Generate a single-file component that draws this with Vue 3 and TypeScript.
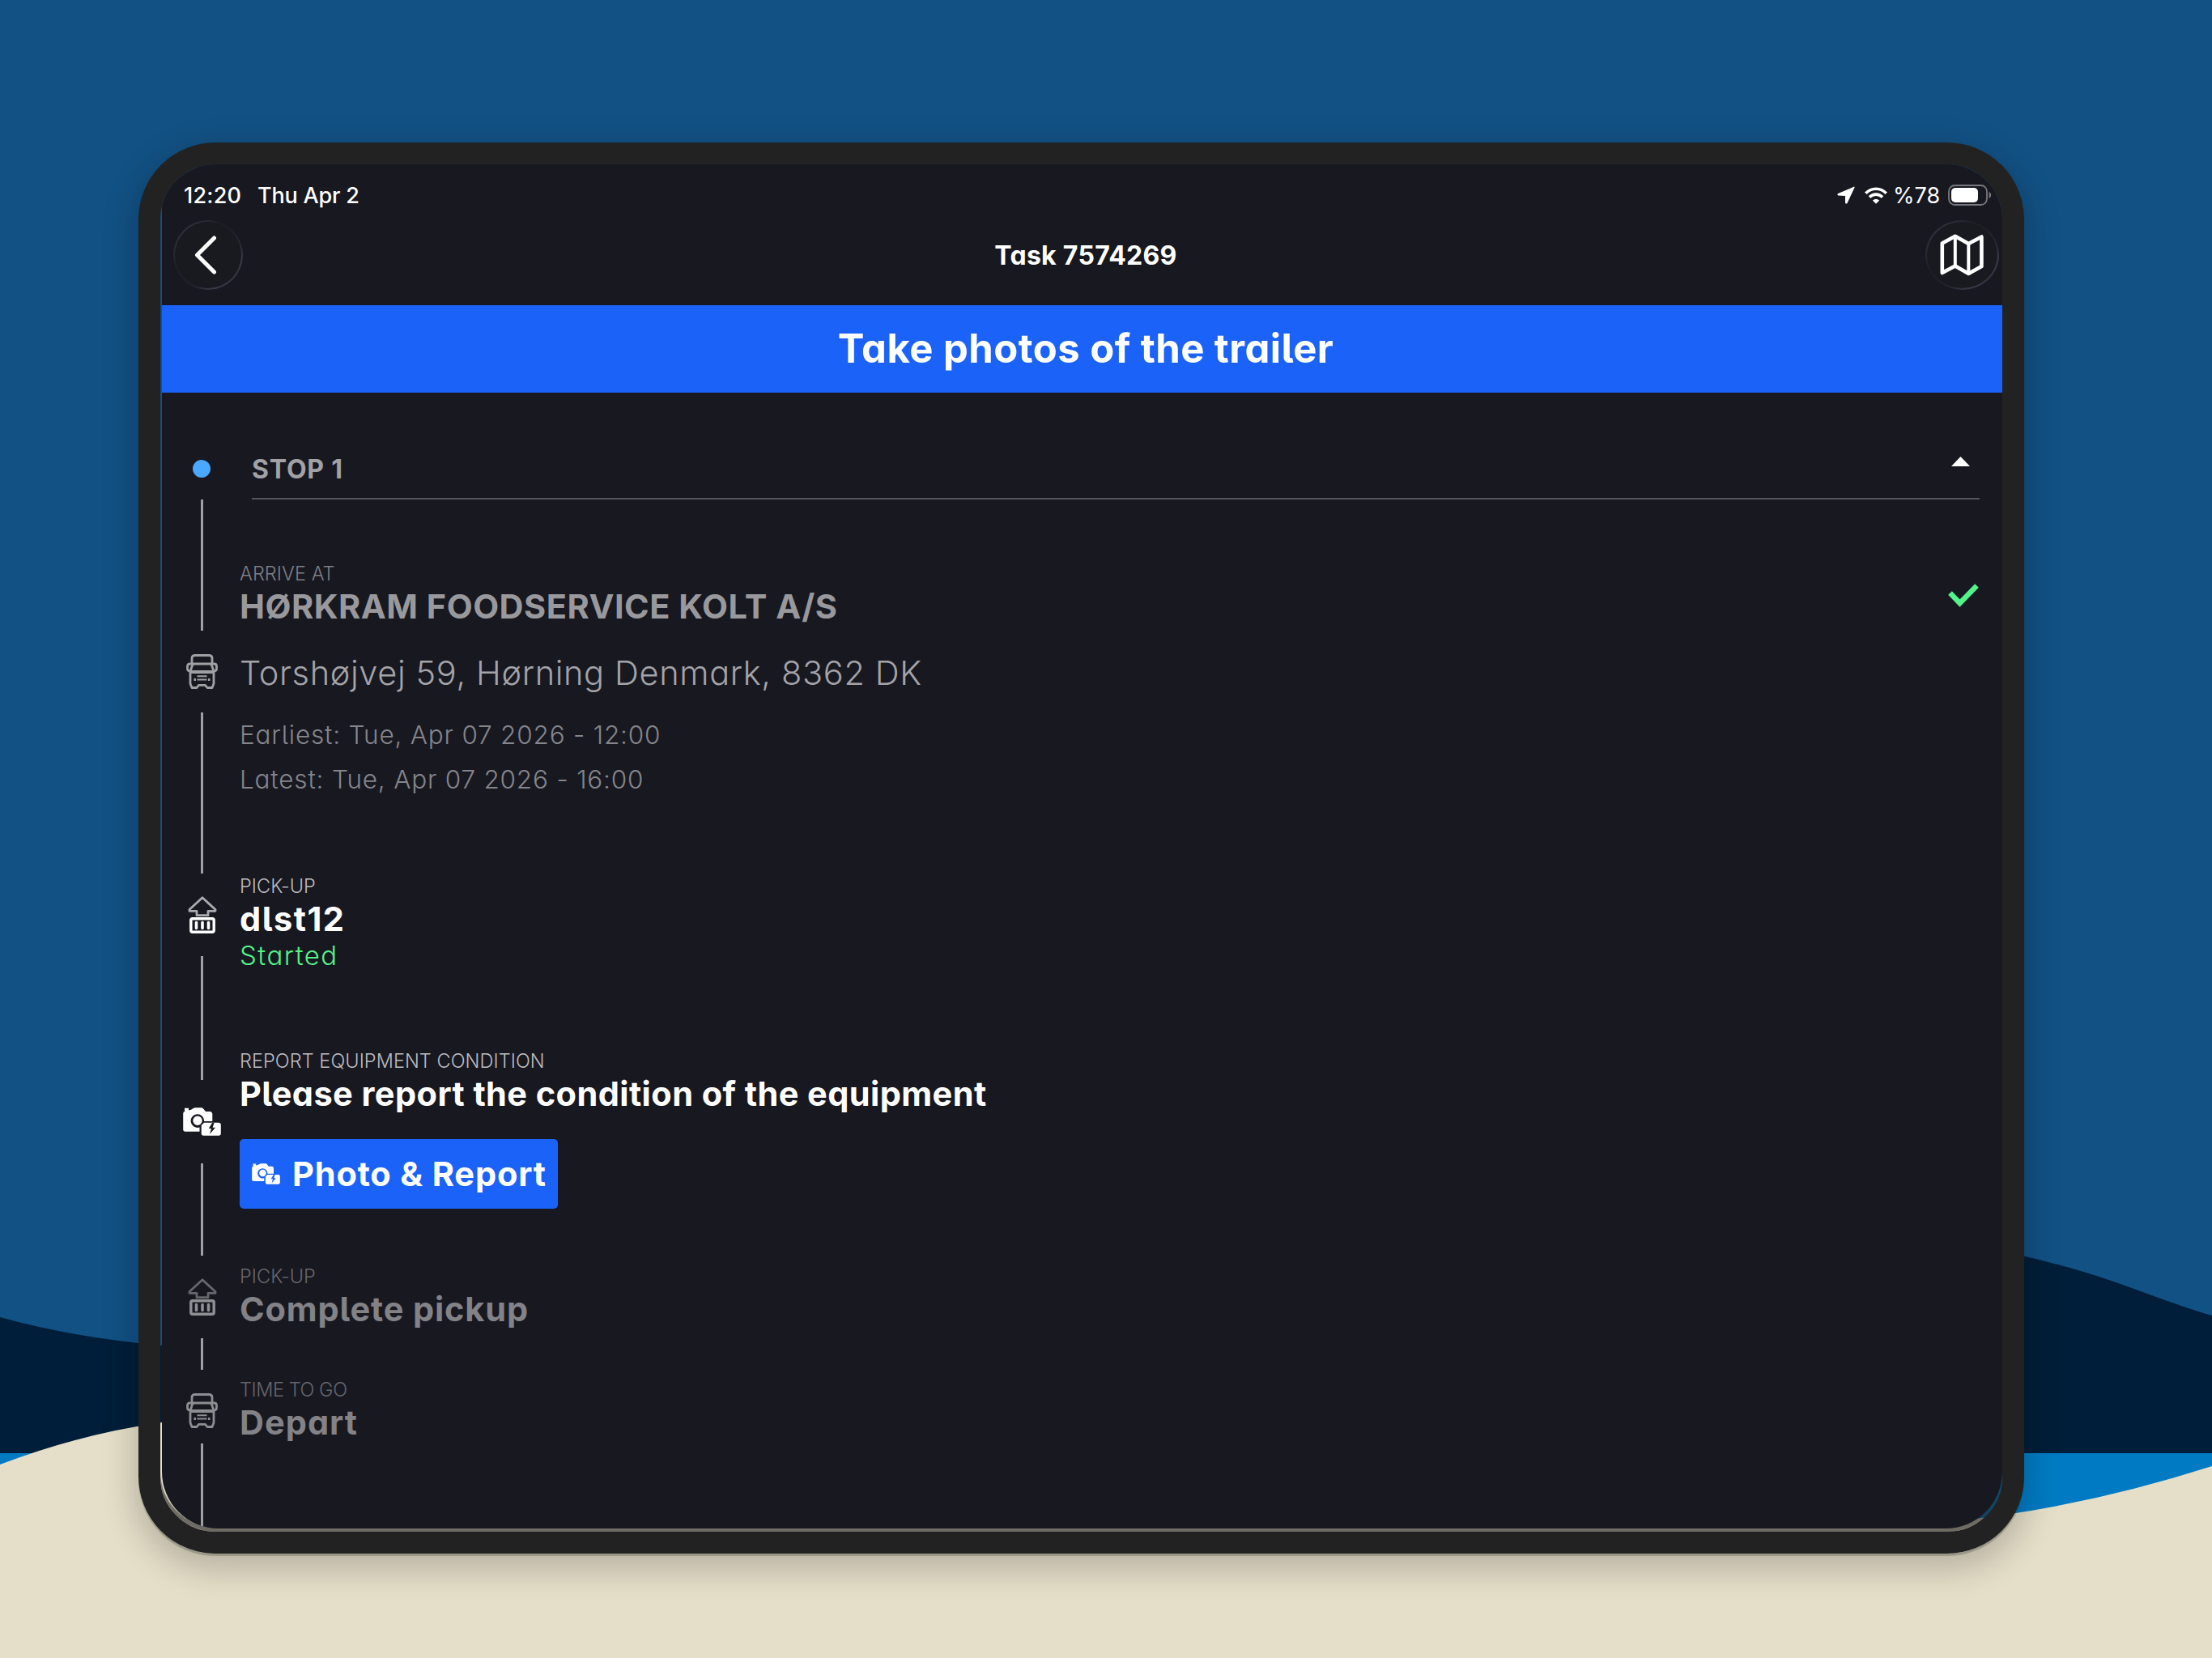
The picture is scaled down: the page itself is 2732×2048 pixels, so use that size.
<script setup lang="ts">
interface Group {
  cls: string
  label: string
  title: string
}

interface RailPart {
  line: number
  node: number
  icon?: 'truck' | 'load' | 'camera'
  tone?: string
  box?: string
}

const groups: Group[] = [
  { cls: 'arrive', label: 'ARRIVE AT', title: 'HØRKRAM FOODSERVICE KOLT A/S' },
  { cls: 'pickup', label: 'PICK-UP', title: 'dlst12' },
  { cls: 'report', label: 'REPORT EQUIPMENT CONDITION', title: 'Please report the condition of the equipment' },
  { cls: 'complete', label: 'PICK-UP', title: 'Complete pickup' },
  { cls: 'depart', label: 'TIME TO GO', title: 'Depart' },
]

// Each part is a connecting line followed by the icon of the step it leads to.
const rail: RailPart[] = [
  { line: 162, node: 101, icon: 'truck', tone: 'bright', box: '0 0 39 43' },
  { line: 199, node: 102, icon: 'load', tone: 'now', box: '0 0 36 46' },
  { line: 153, node: 103, icon: 'camera', tone: '', box: '0 0 47 35' },
  { line: 114, node: 102, icon: 'load', tone: 'later', box: '0 0 36 46' },
  { line: 39, node: 91, icon: 'truck', tone: 'last', box: '0 0 39 43' },
  { line: 105, node: 0 },
]
</script>

<template>
  <main class="stage">
    <svg class="scene" viewBox="0 0 2732 2048" aria-hidden="true">
      <rect width="2732" height="2048" fill="#125184" />
      <path d="M0 1627Q90 1652 200 1662L1300 1700L2440 1540Q2500 1549 2580 1573C2640 1592 2680 1610 2732 1625V1800H0Z" fill="#001e39" />
      <rect y="1795" width="2732" height="253" fill="#007bc3" />
      <path d="M0 1809Q100 1771 200 1757L1400 1800L2400 1880Q2560 1866 2732 1811V2048H0Z" fill="#e5dfc9" />
    </svg>

    <section class="device">
      <div class="screen">
        <div class="status">
          <span class="clock">12:20</span>
          <span class="date">Thu Apr 2</span>
          <span class="fill" />
          <svg class="loc" viewBox="0 0 22 22"><path d="M20.6.7 1.3 8.9C-.1 9.6.2 11.4 1.8 11.5L10 12V20.2C10.1 21.8 12 22 12.6 20.7L21.5 1.7C21.8.9 21.3.4 20.6.7Z" fill="#fff" /></svg>
          <svg class="wifi" viewBox="0 0 28 21" fill="none" stroke="#fff" stroke-width="3.6"><path d="M1.3 7.8C8.5.3 19.5.3 26.7 7.8" /><path d="M6 12.6C10.6 8 17.4 8 22 12.6" /><path d="M14 20.8 9.800 16.6C12 14.3 16 14.3 18.2 16.6Z" fill="#fff" stroke="none" /></svg>
          <span class="pct">%78</span>
          <svg class="battery" viewBox="0 0 54 26"><rect x="1" y="1" width="47" height="24" rx="7.5" fill="none" stroke="#77777d" stroke-width="1.8" /><rect x="4" y="4" width="33" height="18" rx="5" fill="#fff" /><path d="M50.5 9C54 10.2 54 15.8 50.5 17Z" fill="#77777d" /></svg>
        </div>

        <header class="nav">
          <button class="round back" aria-label="Back"><svg viewBox="0 0 28 48"><path d="M24.5 3 3.5 24 24.5 45" fill="none" stroke="#fff" stroke-width="5" stroke-linecap="round" stroke-linejoin="round" /></svg></button>
          <h1>Task 7574269</h1>
          <button class="round map" aria-label="Map"><svg viewBox="0 0 54 52" fill="none" stroke="#fff" stroke-width="4.6" stroke-linejoin="round"><path d="M2.8 11.5 18.8 2.8 35.3 12 51.4 3.5V40L35.3 49 18.8 39.5 2.8 48Z" /><path d="M18.8 2.8V39.5M35.3 12V49" stroke-width="4" /></svg></button>
        </header>

        <div class="banner">Take photos of the trailer</div>

        <div class="stop">
          <span class="dot" />
          <div class="stop-title"><h2>STOP 1</h2><i class="caret" /></div>
        </div>

        <div class="timeline">
          <div class="rail">
            <template v-for="(part, i) in rail" :key="i">
              <i class="seg" :style="{ height: part.line + 'px' }" />
              <div v-if="part.icon" class="node" :style="{ height: part.node + 'px' }">
                <svg :class="[part.icon, part.tone]" :viewBox="part.box"><use :href="'#' + part.icon" /></svg>
              </div>
            </template>
          </div>

          <div class="body">
            <article v-for="g in groups" :key="g.cls" :class="['group', g.cls]">
              <p class="label">{{ g.label }}</p>
              <p class="title">{{ g.title }}</p>
              <template v-if="g.cls === 'arrive'">
                <p class="address">Torshøjvej 59, Hørning Denmark, 8362 DK</p>
                <p class="time">Earliest: Tue, Apr 07 2026 - 12:00</p>
                <p class="time">Latest: Tue, Apr 07 2026 - 16:00</p>
                <svg class="check" viewBox="0 0 38 29"><path d="M2.5 11.5 14.5 24 35.5 2.5" fill="none" stroke="#53f38b" stroke-width="6.5" /></svg>
              </template>
              <p v-if="g.cls === 'pickup'" class="started">Started</p>
              <button v-if="g.cls === 'report'" class="action">
                <svg viewBox="0 0 47 35"><use href="#camera" /></svg><span>Photo &amp; Report</span>
              </button>
            </article>
          </div>
        </div>
      </div>
    </section>

    <svg class="defs" aria-hidden="true">
      <symbol id="truck" viewBox="0 0 39 43">
        <g fill="none" stroke="currentColor" stroke-width="2.8" stroke-linejoin="round" stroke-linecap="round">
          <path d="M7 11.5V5Q7 1.5 11 1.5H28Q32 1.5 32 5V11.5" />
          <path d="M10 12H29Q31 12 31.6 14L34 21.5H5L7.4 14Q8 12 10 12Z" />
          <path d="M8 12H4.5Q1.5 12 1.5 15V18Q1.5 21 5 21M31 12H34.5Q37.5 12 37.5 15V18Q37.5 21 34 21" />
          <path d="M5 21.5V36.5L7 41.5H13L15.5 38.3H23.5L26 41.5H32L34 36.5V21.5" />
        </g>
        <g fill="none" stroke="currentColor" stroke-width="2"><path d="M6 23H33M13.5 27.3H25.5M13.5 31.5H25.5" /><path d="M9.5 31.5H12M27 31.5H29.5" stroke-width="3" /></g>
      </symbol>
      <symbol id="load" viewBox="0 0 36 46">
        <path d="M18 1.8 34 16.5V18.3H25V23.7H11V18.3H2V16.5Z" fill="none" stroke="currentColor" stroke-width="2.8" stroke-linejoin="round" />
        <rect x="3.8" y="27.8" width="28.4" height="16.4" rx="2" fill="none" stroke="var(--box)" stroke-width="3.4" />
        <path d="M10.5 32.5V39.5M18 32.5V39.5M25.5 32.5V39.5" stroke="var(--box)" stroke-width="3.6" stroke-linecap="round" />
      </symbol>
      <symbol id="camera" viewBox="0 0 47 35">
        <path fill="currentColor" fill-rule="evenodd" d="M2 .7H7V3.5L10 2.8Q13 .3 15 .3H23Q24.5.3 28 5H33.5Q36.3 5.5 36.3 8V17H26.2A8.3 8.3 0 1 0 20.5 24.5V29.7H3Q.2 29.7.2 27V7.5Q.2 5 2.5 4.7L2 3.5ZM18 10.5A5.7 5.7 0 1 0 18 21.9A5.7 5.7 0 1 0 18 10.5Z" />
        <path fill="currentColor" fill-rule="evenodd" d="M26 18.7H44Q46.8 18.7 46.8 21.5V32Q46.8 34.8 44 34.8H25.5Q22.7 34.8 22.7 32V22ZM36 19 31.8 26H35L33 33 40 24.7H36.6L38.5 19Z" />
      </symbol>
    </svg>
  </main>
</template>

<style>
body { margin: 0; }
</style>

<style scoped>
.stage { position: relative; width: 2732px; height: 2048px; overflow: hidden; display: flex; align-items: flex-start; font-family: Inter, "Liberation Sans", sans-serif; color: #fff; }
.scene { position: absolute; inset: 0; width: 2732px; height: 2048px; }
.defs { position: absolute; width: 0; height: 0; }
.device { position: relative; box-sizing: border-box; margin: 176px 0 0 171px; width: 2329px; height: 1743px; border: 27px solid #222; border-radius: 95px; overflow: hidden; display: flex; box-shadow: inset 0 -6px 1px rgba(30, 30, 34, .6), 0 3px 1px rgba(40, 38, 32, .25), 0 14px 38px 8px rgba(0, 0, 0, .19); }
.screen { margin-left: 2px; width: 2273px; height: 1685px; background: #181821; border-radius: 0 0 70px 70px; overflow: hidden; display: flex; flex-direction: column; font-feature-settings: "cv11", "cv05"; }
h1, h2, p { margin: 0; }
button { border: 0; padding: 0; margin: 0; font: inherit; color: inherit; font-feature-settings: inherit; }
.status { box-sizing: border-box; height: 69px; padding: 7px 13px 0 27px; display: flex; align-items: center; font-size: 27px; font-weight: 500; white-space: nowrap; font-feature-settings: normal; }
.clock { width: 91px; letter-spacing: .22px; }
.date { letter-spacing: -.18px; }
.fill { flex: 1; }
.loc { width: 22px; height: 22px; margin-right: 12px; }
.wifi { width: 28px; height: 21px; margin-right: 7px; }
.pct { width: 68px; font-weight: 400; }
.battery { width: 54px; height: 26px; }
.nav { height: 105px; display: flex; align-items: flex-start; justify-content: space-between; padding: 0 4px 0 14px; }
.nav h1 { line-height: 86px; font-size: 32px; font-weight: 700; letter-spacing: .28px; white-space: nowrap; padding: 1px 0 0 4px; }
.round { height: 86px; border-radius: 50%; display: flex; align-items: center; justify-content: center; background: linear-gradient(#191a20, #191a20) padding-box, linear-gradient(135deg, #3c3a4a, #1d1d26 38%, #22222c 60%, #3c3a4a 80%, #1d1d26) border-box; border: 2px solid transparent; box-sizing: border-box; }
.back { width: 86px; }
.back svg { width: 28px; height: 48px; margin-right: 7px; }
.map { width: 91px; }
.map svg { width: 54px; height: 52px; }
.banner { height: 108px; line-height: 108px; text-align: center; background: #1b63f8; font-size: 49px; font-weight: 700; letter-spacing: .46px; box-sizing: border-box; padding-left: 9px; white-space: nowrap; }
.stop { height: 132px; box-sizing: border-box; padding: 59px 28px 0 38px; display: flex; }
.dot { width: 22px; height: 22px; margin: 24px 51px 0 0; border-radius: 50%; background: #4aa8ff; }
.stop-title { flex: 1; height: 73px; box-sizing: border-box; border-bottom: 2px solid #55555d; display: flex; justify-content: space-between; }
.stop-title h2 { font-size: 32px; line-height: 71px; font-weight: 700; letter-spacing: .8px; color: #a1a1a6; }
.caret { width: 23px; height: 12px; margin: 20px 12px 0 0; background: #fff; clip-path: polygon(50% 0, 100% 100%, 0 100%); }
.timeline { display: flex; height: 1271px; }
.rail { width: 99px; display: flex; flex-direction: column; align-items: center; }
.seg { width: 2.5px; background: #a0a0a4; }
.node { display: flex; align-items: center; justify-content: center; }
.truck { width: 39px; height: 43px; color: #8d8d92; }
.bright { color: #a0a0a4; }
.last { margin-top: 10px; }
.load { width: 36px; height: 46px; }
.now { color: #aaaaae; --box: #fff; }
.later { color: #66666c; --box: #8f8f94; }
.camera { width: 47px; height: 35px; }
.body { width: 2145px; margin-left: -3px; }
.group { position: relative; white-space: nowrap; }
.label { font-size: 23.5px; font-weight: 300; line-height: 30px; letter-spacing: .06px; }
.title { font-size: 41.5px; font-weight: 700; line-height: 50px; letter-spacing: .5px; }
.arrive { margin-top: 76.5px; height: 386px; }
.arrive .label { color: #7f7f85; }
.arrive .title { color: #98989d; }
.address { margin-top: 32px; font-size: 41.5px; font-weight: 300; line-height: 50px; letter-spacing: .64px; color: #a3a3a8; }
.time { margin-top: 15px; font-size: 31.5px; font-weight: 300; line-height: 40px; letter-spacing: .8px; color: #85858b; }
.address + .time { margin-top: 32px; }
.check { position: absolute; right: -3px; top: 27px; width: 38px; height: 29px; }
.pickup, .report { height: 216px; }
.pickup .label, .report .label { color: #bcbcc0; }
.pickup .title { letter-spacing: 1.51px; }
.started { font-size: 33px; line-height: 40px; font-weight: 300; letter-spacing: 1.5px; color: #53f38b; }
.report { height: 266px; }
.report .title { letter-spacing: .42px; }
.action { margin: 31px 0 0 0; width: 393px; height: 86px; box-sizing: border-box; padding-left: 15px; border-radius: 5px; background: #1b63f8; display: flex; align-items: center; font-size: 41.5px; font-weight: 700; letter-spacing: .85px; }
.action svg { width: 35px; height: 26px; margin-right: 15px; }
.complete { height: 140px; }
.complete .label, .depart .label { color: #66666c; }
.complete .title, .depart .title { color: #828287; letter-spacing: .85px; }
.depart .label { letter-spacing: -.43px; }
.depart .title { letter-spacing: 1.02px; }
</style>
